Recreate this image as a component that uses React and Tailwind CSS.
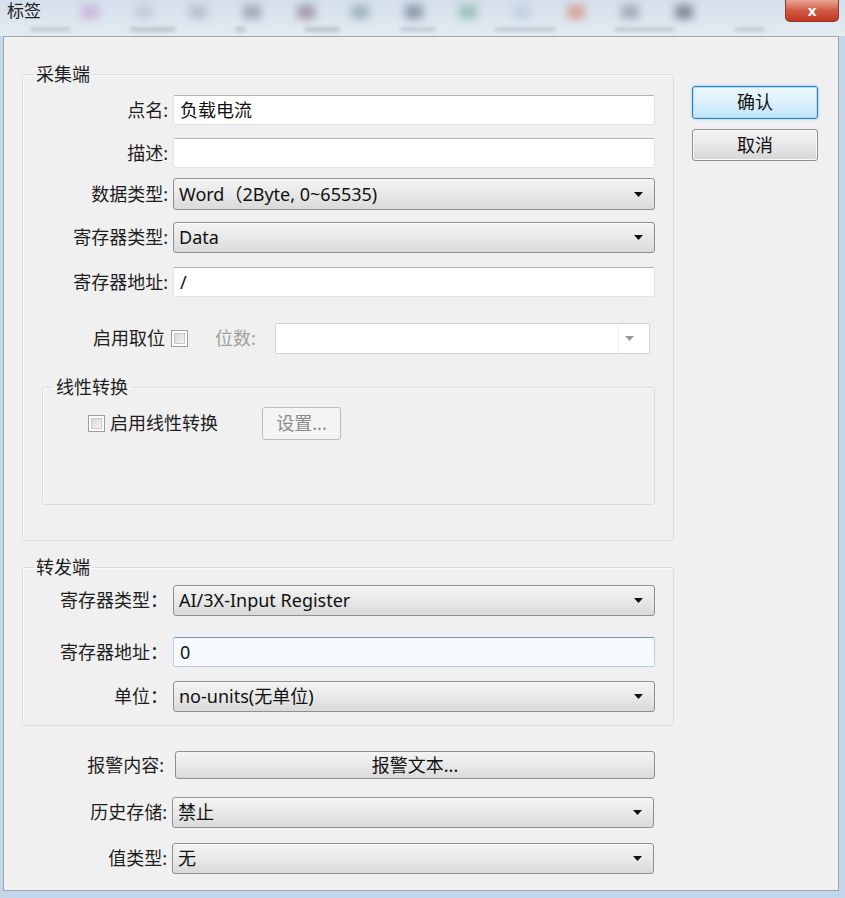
import React from "react";

const F = "font-['Noto_Sans','Noto_Sans_CJK_SC',sans-serif]";

function Arrow({ gray }) {
  return (
    <svg width="9" height="5" viewBox="0 0 9 5" className="shrink-0">
      <path d="M0 0 H9 L4.5 5 Z" fill={gray ? "#9a9a9a" : "#111"} />
    </svg>
  );
}

function TextBox({ value, h = "h-[30px]", focused }) {
  return (
    <div
      className={
        "w-[482px] " +
        h +
        " flex items-center pl-[6px] text-[18px] text-[#111] rounded-[2px] border " +
        (focused
          ? "bg-[#f7fbff] border-[#b6cde6] border-t-[#6f98c6]"
          : "bg-white border-[#e1e3e8] border-t-[#b1b3b9]")
      }
    >
      {value}
    </div>
  );
}

function Combo({ value, h = "h-[32px]", w = "w-[482px]" }) {
  return (
    <div
      className={
        w +
        " " +
        h +
        " flex items-center justify-between pl-[5px] pr-[11px] text-[18px] text-[#111] rounded-[3px] border border-[#8e8f8f] bg-linear-to-b from-[#f3f3f3] via-[#e9e9e9] to-[#d9d9d9] shadow-[inset_0_1px_0_#fbfbfb]"
      }
    >
      <span className="whitespace-nowrap">{value}</span>
      <Arrow />
    </div>
  );
}

function Check() {
  return (
    <div className="w-[17px] h-[17px] border border-[#9c9c9c] bg-white p-[2px] shrink-0">
      <div className="w-full h-full bg-linear-to-br from-[#d9d9d9] to-[#f4f4f4] border border-[#c8c8c8]" />
    </div>
  );
}

function Row({ label, children, mt, lw = "w-[145px]", gap = "gap-[5px]" }) {
  return (
    <div className={"flex items-center " + gap + " " + mt}>
      <div className={lw + " text-right text-[18px] text-[#1e1e1e] whitespace-nowrap"}>{label}</div>
      {children}
    </div>
  );
}

export default function App() {
  return (
    <div className={"w-[845px] h-[898px] bg-[#c4d7ea] flex flex-col overflow-hidden " + F}>
      {/* title bar */}
      <div className="h-[36px] flex flex-col bg-linear-to-b from-[#d3dfeb] via-[#dce6ef] to-[#e4ebf2]">
        <div className="h-[22px] flex items-start justify-between">
          <div className="flex items-center">
            <span className="ml-[7px] mt-[1px] shrink-0 whitespace-nowrap text-[17px] leading-[20px] text-[#222]">标签</span>
            <div className="flex gap-[36px] ml-[40px] mt-[2px] blur-[4px] opacity-70">
              <div className="w-[18px] h-[14px] bg-[#c9a6d8]" />
              <div className="w-[18px] h-[14px] bg-[#b7c3cf]" />
              <div className="w-[18px] h-[14px] bg-[#a9b4c0]" />
              <div className="w-[18px] h-[14px] bg-[#8a93a3]" />
              <div className="w-[18px] h-[14px] bg-[#8e7e8f]" />
              <div className="w-[18px] h-[14px] bg-[#8aa3a8]" />
              <div className="w-[18px] h-[14px] bg-[#6e7a8e]" />
              <div className="w-[18px] h-[14px] bg-[#82b4a4]" />
              <div className="w-[18px] h-[14px] bg-[#b9c9d9]" />
              <div className="w-[18px] h-[14px] bg-[#d98c7a]" />
              <div className="w-[18px] h-[14px] bg-[#8e98a6]" />
              <div className="w-[18px] h-[14px] bg-[#5f6673]" />
            </div>
          </div>
          <div className="mr-[6px] shrink-0 w-[54px] h-[22px] rounded-b-[5px] border border-t-0 border-[#8a3b30] bg-linear-to-b from-[#e8a493] via-[#d15b45] to-[#c2341f] flex items-center justify-center text-white text-[15px] font-bold">
            x
          </div>
        </div>
        <div className="h-[14px] flex items-center gap-[60px] pl-[30px] blur-[2px] opacity-40">
          <div className="w-[40px] h-[3px] bg-[#6b7687]" />
          <div className="w-[45px] h-[3px] bg-[#4d5666]" />
          <div className="w-[10px] h-[3px] bg-[#4d5666]" />
          <div className="w-[35px] h-[3px] bg-[#4d5666]" />
          <div className="w-[35px] h-[3px] bg-[#6b7687]" />
          <div className="w-[60px] h-[3px] bg-[#6b7687]" />
          <div className="w-[60px] h-[3px] bg-[#6b7687]" />
          <div className="w-[30px] h-[3px] bg-[#6b7687]" />
        </div>
      </div>

      {/* dialog body */}
      <div className="ml-[3px] w-[836px] h-[855px] border border-[#9aa7b4] bg-[#f0f0f0] flex pl-[18px] pt-[26px]">
        {/* left column */}
        <div className="w-[652px] flex flex-col">
          <fieldset className="border border-[#d8dde2] rounded-[3px] pb-[35px] shadow-[inset_1px_1px_0_#fafafa]">
            <legend className="ml-[11px] px-[2px] text-[18px] leading-[22px] text-[#1e1e1e]">采集端</legend>
            <div className="pt-[10px] flex flex-col">
              <Row label="点名:">
                <TextBox value="负载电流" />
              </Row>
              <Row label="描述:" mt="mt-[13px]">
                <TextBox value="" />
              </Row>
              <Row label="数据类型:" mt="mt-[10px]">
                <Combo value="Word（2Byte, 0~65535)" />
              </Row>
              <Row label="寄存器类型:" mt="mt-[12px]">
                <Combo value="Data" h="h-[31px]" />
              </Row>
              <Row label="寄存器地址:" mt="mt-[14px]">
                <TextBox value="/" />
              </Row>
              <div className="flex items-center mt-[26px]">
                <div className="w-[142px] text-right text-[18px] text-[#1e1e1e]">启用取位</div>
                <div className="ml-[6px]">
                  <Check />
                </div>
                <div className="ml-[27px] w-[60px] text-[18px] text-[#a0a0a0]">位数:</div>
                <div className="w-[375px] h-[31px] flex items-center justify-end pr-[9px] bg-white border border-[#d3d3d3] rounded-[2px]">
                  <div className="h-full w-[22px] flex items-center justify-center border-l border-[#f0f0f0]">
                    <Arrow gray />
                  </div>
                </div>
              </div>
              <fieldset className="mt-[22px] ml-[19px] mr-[18px] border border-[#d8dde2] rounded-[3px] pb-[64px] shadow-[inset_1px_1px_0_#fafafa]">
                <legend className="ml-[11px] px-[2px] text-[18px] leading-[22px] text-[#1e1e1e]">线性转换</legend>
                <div className="pt-[9px] flex items-center">
                  <div className="ml-[45px]">
                    <Check />
                  </div>
                  <span className="ml-[5px] text-[18px] text-[#1e1e1e]">启用线性转换</span>
                  <div className="ml-[44px] w-[79px] h-[33px] flex items-center justify-center rounded-[3px] border border-[#b8bcc0] bg-[#f4f4f4] text-[18px] text-[#8a8a8a]">
                    设置...
                  </div>
                </div>
              </fieldset>
            </div>
          </fieldset>

          <fieldset className="mt-[15px] border border-[#d8dde2] rounded-[3px] pb-[13px] shadow-[inset_1px_1px_0_#fafafa]">
            <legend className="ml-[11px] px-[2px] text-[18px] leading-[22px] text-[#1e1e1e]">转发端</legend>
            <div className="pt-[7px] flex flex-col">
              <Row label="寄存器类型：">
                <Combo value="AI/3X-Input Register" h="h-[31px]" />
              </Row>
              <Row label="寄存器地址：" mt="mt-[21px]">
                <TextBox value="0" focused />
              </Row>
              <Row label="单位：" mt="mt-[14px]">
                <Combo value="no-units(无单位)" h="h-[31px]" />
              </Row>
            </div>
          </fieldset>

          <div className="flex items-center mt-[25px]">
            <div className="w-[142px] text-right text-[18px] text-[#1e1e1e]">报警内容:</div>
            <div className="ml-[11px] w-[480px] h-[28px] flex items-center justify-center rounded-[3px] border border-[#8e8f8f] bg-linear-to-b from-[#f3f3f3] via-[#e9e9e9] to-[#d9d9d9] text-[18px] text-[#111]">
              报警文本...
            </div>
          </div>
          <Row label="历史存储:" mt="mt-[18px]">
            <Combo value="禁止" h="h-[31px]" />
          </Row>
          <Row label="值类型:" mt="mt-[15px]">
            <Combo value="无" h="h-[31px]" />
          </Row>
        </div>

        {/* right column */}
        <div className="ml-[18px] mt-[23px] flex flex-col">
          <div className="w-[126px] h-[33px] flex items-center justify-center rounded-[3px] border border-[#3c7fb1] bg-linear-to-b from-[#ecf7fd] via-[#dcf0fb] to-[#c0e4f8] shadow-[0_0_3px_#7fc5f0,inset_0_0_0_1px_#a8dcf8] text-[18px] text-[#111]">
            确认
          </div>
          <div className="mt-[10px] w-[126px] h-[32px] flex items-center justify-center rounded-[3px] border border-[#8e8f8f] bg-linear-to-b from-[#f3f3f3] via-[#e8e8e8] to-[#d6d6d6] shadow-[inset_0_0_0_1px_#fafafa] text-[18px] text-[#111]">
            取消
          </div>
        </div>
      </div>
    </div>
  );
}
